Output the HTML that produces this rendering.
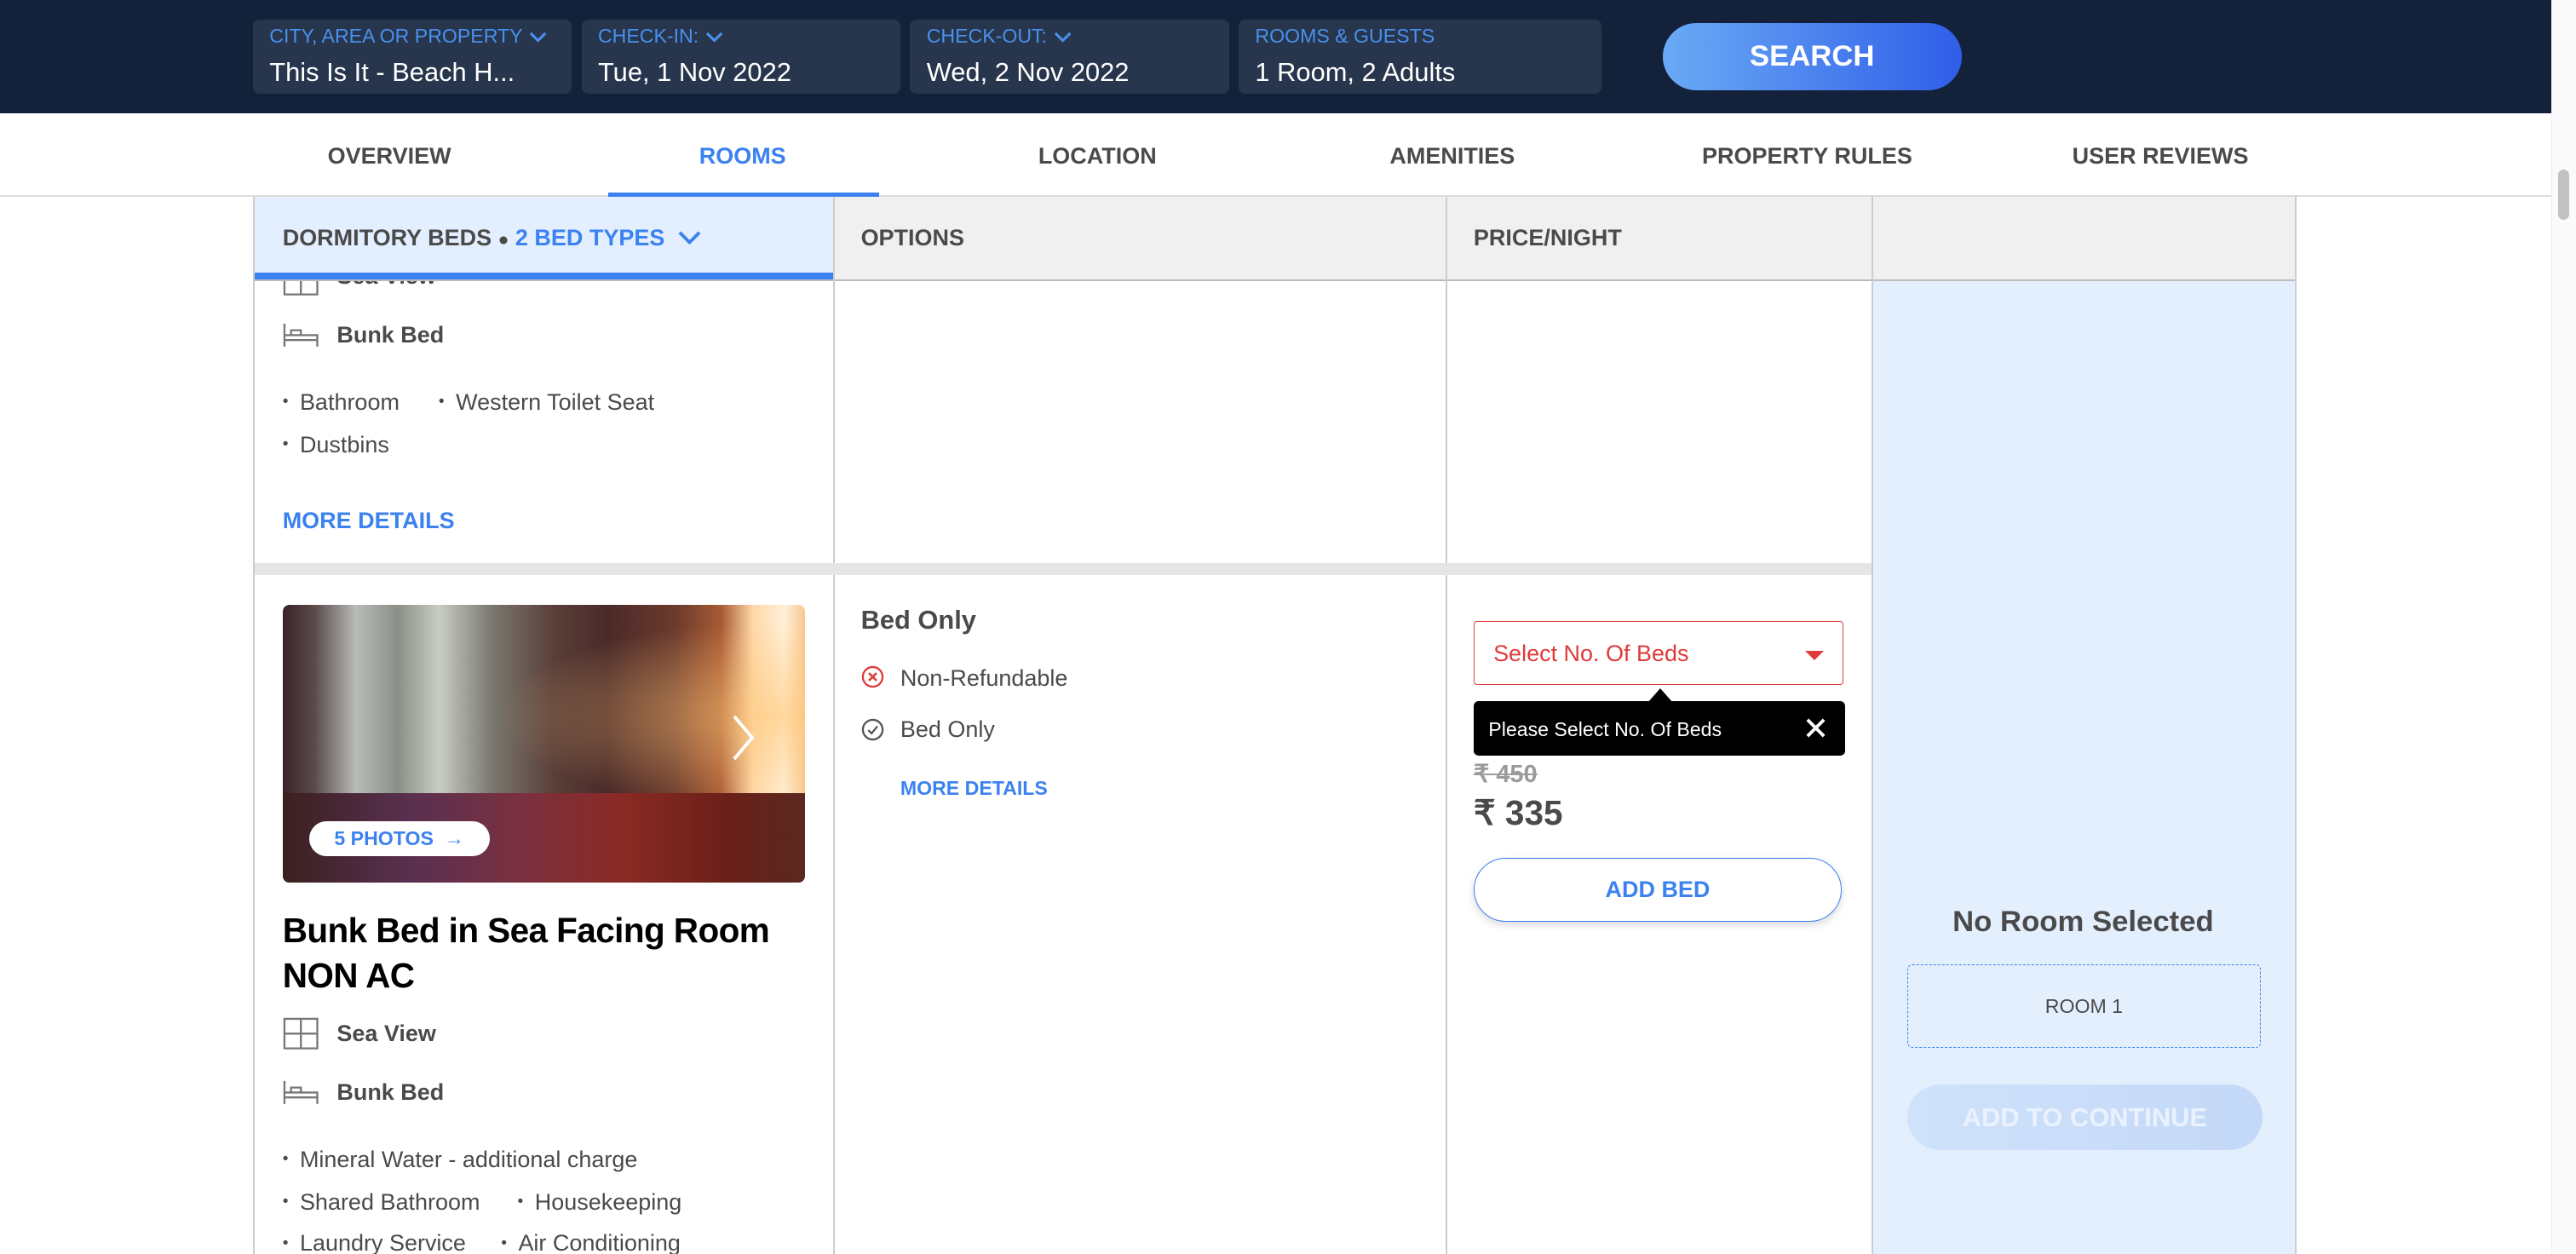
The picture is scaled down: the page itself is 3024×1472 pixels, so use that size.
<!DOCTYPE html>
<html><head><meta charset="utf-8">
<style>
html,body{margin:0;padding:0;background:#fff;overflow:hidden}
body{width:3024px;height:1472px}
#w{zoom:1.928571;width:1568px;height:764px;position:relative;font-family:"Liberation Sans",sans-serif;color:#4a4a4a;overflow:hidden}
.a{position:absolute}
.fld{position:absolute;top:12px;height:45px;background:#27364d;border-radius:4px}
.fld .l{position:absolute;left:10px;top:3px;font-size:12px;color:#4a90ee;white-space:nowrap}
.fld .v{position:absolute;left:10px;top:23px;font-size:16px;color:#fff;white-space:nowrap}
.nav{position:absolute;top:87px;font-size:14px;font-weight:bold;color:#4a4a4a;transform:translateX(-50%);white-space:nowrap}
.vl{position:absolute;width:1px;background:#ccc}
.li{position:absolute;font-size:14px;color:#4a4a4a;white-space:nowrap}
.li:before{content:"•";font-size:10px;margin-right:7px;position:relative;top:-2px}
.chv{display:inline-block;vertical-align:middle;margin-left:4px}
</style></head><body><div id="w">
<!-- header -->
<div class="a" style="left:0;top:0;width:1568px;height:69px;background:#13213b"></div>
<div class="fld" style="left:154px;width:194px"><div class="l">CITY, AREA OR PROPERTY<svg class="chv" width="11" height="7"><path d="M1 1l4.5 4.5L10 1" fill="none" stroke="#4a90ee" stroke-width="1.6"/></svg></div><div class="v">This Is It - Beach H...</div></div>
<div class="fld" style="left:354px;width:194px"><div class="l">CHECK-IN:<svg class="chv" width="11" height="7"><path d="M1 1l4.5 4.5L10 1" fill="none" stroke="#4a90ee" stroke-width="1.6"/></svg></div><div class="v">Tue, 1 Nov 2022</div></div>
<div class="fld" style="left:554px;width:194px"><div class="l">CHECK-OUT:<svg class="chv" width="11" height="7"><path d="M1 1l4.5 4.5L10 1" fill="none" stroke="#4a90ee" stroke-width="1.6"/></svg></div><div class="v">Wed, 2 Nov 2022</div></div>
<div class="fld" style="left:754px;width:221px"><div class="l">ROOMS &amp; GUESTS</div><div class="v">1 Room, 2 Adults</div></div>
<div class="a" style="left:1012px;top:14px;width:182px;height:41px;border-radius:21px;background:linear-gradient(90deg,#6aaaf5,#2f5ee8);color:#fff;font-weight:bold;font-size:18px;text-align:center;line-height:41px">SEARCH</div>
<!-- nav -->
<div class="nav" style="left:237px">OVERVIEW</div>
<div class="nav" style="left:452px;color:#3b82f0">ROOMS</div>
<div class="nav" style="left:668px">LOCATION</div>
<div class="nav" style="left:884px">AMENITIES</div>
<div class="nav" style="left:1100px">PROPERTY RULES</div>
<div class="nav" style="left:1315px">USER REVIEWS</div>
<div class="a" style="left:0;top:119px;width:1553px;height:1px;background:#ddd"></div>
<div class="a" style="left:370px;top:117px;width:165px;height:3px;background:#3b82f0"></div>
<!-- scrollbar -->
<div class="a" style="left:1553px;top:0;width:15px;height:764px;background:#fafafa;border-left:1px solid #eee"></div>
<div class="a" style="left:1557px;top:103px;width:7px;height:31px;border-radius:4px;background:#c1c1c1"></div>
<!-- row1 partial top -->
<svg class="a" style="left:172px;top:160px" width="22" height="20"><path d="M1 1h20v18H1zM11 1v18M1 10h20" fill="none" stroke="#777" stroke-width="1.2"/></svg>
<div class="a" style="left:205px;top:160px;font-size:14px;font-weight:bold">Sea View</div>
<!-- table header -->
<div class="a" style="left:154px;top:120px;width:1243px;height:50px;background:#f0f0f0"></div>
<div class="a" style="left:154px;top:120px;width:353px;height:50px;background:#e3efff"></div>
<div class="a" style="left:154px;top:166px;width:353px;height:4px;background:#3b82f0"></div>
<div class="a" style="left:154px;top:170px;width:1243px;height:1px;background:#bbb"></div>
<div class="a" style="left:172px;top:137px;font-size:14px;font-weight:bold;white-space:nowrap">DORMITORY BEDS <span style="font-size:11px">&#9679;</span> <span style="color:#3b82f0">2 BED TYPES</span><svg class="chv" style="margin-left:8px;margin-top:-3px" width="14" height="9"><path d="M1 1.5l6 6 6-6" fill="none" stroke="#3b82f0" stroke-width="2"/></svg></div>
<div class="a" style="left:524px;top:137px;font-size:14px;font-weight:bold">OPTIONS</div>
<div class="a" style="left:897px;top:137px;font-size:14px;font-weight:bold">PRICE/NIGHT</div>
<!-- right panel -->
<div class="a" style="left:1139px;top:171px;width:258px;height:600px;background:#e4effe"></div>
<!-- verticals -->
<div class="vl" style="left:154px;top:120px;height:650px"></div>
<div class="vl" style="left:507px;top:120px;height:650px"></div>
<div class="vl" style="left:880px;top:120px;height:650px"></div>
<div class="vl" style="left:1139px;top:120px;height:650px"></div>
<div class="vl" style="left:1397px;top:120px;height:650px"></div>
<!-- row1 -->
<svg class="a" style="left:172px;top:196px" width="22" height="16"><path d="M1 1v14M1 8h20v7M1 11h20M5 8V5h6v3" fill="none" stroke="#777" stroke-width="1.2"/></svg>
<div class="a" style="left:205px;top:196px;font-size:14px;font-weight:bold">Bunk Bed</div>
<div class="li" style="left:172px;top:237px">Bathroom</div>
<div class="li" style="left:267px;top:237px">Western Toilet Seat</div>
<div class="li" style="left:172px;top:263px">Dustbins</div>
<div class="a" style="left:172px;top:309px;font-size:14px;font-weight:bold;color:#3b82f0">MORE DETAILS</div>
<div class="a" style="left:155px;top:343px;width:984px;height:7px;background:#e5e5e5"></div>
<!-- row2 image -->
<div class="a" style="left:172px;top:368px;width:318px;height:169px;border-radius:4px;overflow:hidden;background:linear-gradient(90deg,#3a2226 0%,#5a4a4a 6%,#b8bcb8 14%,#8a9088 22%,#c8ccc4 30%,#7a7870 40%,#5a3e38 52%,#4a2a2a 62%,#6a3a2c 75%,#a85a34 84%,#ffd8a8 90%,#fff0d8 96%,#f8c890 100%)">
<div class="a" style="left:0;top:0;width:318px;height:169px;background:radial-gradient(ellipse at 95% 40%,rgba(255,200,120,.6),rgba(255,150,60,0) 40%)"></div>
<div class="a" style="left:0;top:115px;width:318px;height:54px;background:linear-gradient(90deg,#3a2020,#5a3050 25%,#7a3040 45%,#8a2a24 65%,#6a2018 85%,#5a2820)"></div>
<div class="a" style="left:16px;top:132px;width:110px;height:21px;border-radius:11px;background:#fff;color:#3b82f0;font-size:12px;font-weight:bold;line-height:21px;text-align:center">5 PHOTOS &nbsp;&rarr;</div>
<svg class="a" style="left:273px;top:66px" width="16" height="30"><path d="M2 2l11 13L2 28" fill="none" stroke="#fff" stroke-width="2"/></svg>
</div>
<div class="a" style="left:172px;top:553px;font-size:21px;font-weight:bold;color:#000;line-height:27px;width:330px;letter-spacing:-0.3px">Bunk Bed in Sea Facing Room NON AC</div>
<svg class="a" style="left:172px;top:619px" width="22" height="20"><path d="M1 1h20v18H1zM11 1v18M1 10h20" fill="none" stroke="#777" stroke-width="1.2"/></svg>
<div class="a" style="left:205px;top:621px;font-size:14px;font-weight:bold">Sea View</div>
<svg class="a" style="left:172px;top:657px" width="22" height="16"><path d="M1 1v14M1 8h20v7M1 11h20M5 8V5h6v3" fill="none" stroke="#777" stroke-width="1.2"/></svg>
<div class="a" style="left:205px;top:657px;font-size:14px;font-weight:bold">Bunk Bed</div>
<div class="li" style="left:172px;top:698px">Mineral Water - additional charge</div>
<div class="li" style="left:172px;top:724px">Shared Bathroom</div>
<div class="li" style="left:315px;top:724px">Housekeeping</div>
<div class="li" style="left:172px;top:749px">Laundry Service</div>
<div class="li" style="left:305px;top:749px">Air Conditioning</div>
<!-- options -->
<div class="a" style="left:524px;top:368px;font-size:16px;font-weight:bold">Bed Only</div>
<svg class="a" style="left:524px;top:405px" width="14" height="14"><circle cx="7" cy="7" r="6" fill="none" stroke="#e03a3a" stroke-width="1.2"/><path d="M4.7 4.7l4.6 4.6M9.3 4.7l-4.6 4.6" stroke="#e03a3a" stroke-width="1.3"/></svg>
<div class="a" style="left:548px;top:405px;font-size:14px">Non-Refundable</div>
<svg class="a" style="left:524px;top:437px" width="14" height="14"><circle cx="7" cy="7" r="6" fill="none" stroke="#555" stroke-width="1.2"/><path d="M4.3 7.3l2 2 3.5-4.3" fill="none" stroke="#555" stroke-width="1.2"/></svg>
<div class="a" style="left:548px;top:436px;font-size:14px">Bed Only</div>
<div class="a" style="left:548px;top:473px;font-size:12px;font-weight:bold;color:#3b82f0">MORE DETAILS</div>
<!-- price -->
<div class="a" style="left:897px;top:378px;width:224px;height:38px;border:1px solid #e03a3a;border-radius:2px;background:#fff"></div>
<div class="a" style="left:909px;top:390px;font-size:14px;color:#e03a3a">Select No. Of Beds</div>
<div class="a" style="left:1099px;top:396px;width:0;height:0;border-left:6px solid transparent;border-right:6px solid transparent;border-top:6px solid #e03a3a"></div>
<div class="a" style="left:1003px;top:419px;width:0;height:0;border-left:8px solid transparent;border-right:8px solid transparent;border-bottom:9px solid #000"></div>
<div class="a" style="left:897px;top:427px;width:226px;height:33px;background:#000;border-radius:3px"></div>
<div class="a" style="left:906px;top:437px;font-size:12px;color:#fff">Please Select No. Of Beds</div>
<svg class="a" style="left:1098px;top:436px" width="14" height="14"><path d="M2 2l10 10M12 2L2 12" stroke="#fff" stroke-width="2"/></svg>
<div class="a" style="left:897px;top:462px;font-size:15px;color:#9b9b9b;text-decoration:line-through;font-weight:bold">&#8377; 450</div>
<div class="a" style="left:897px;top:482px;font-size:21px;color:#4a4a4a;font-weight:bold">&#8377; 335</div>
<div class="a" style="left:897px;top:522px;width:223px;height:38px;border:1px solid #3b82f0;border-radius:20px;background:#fff;box-shadow:0 2px 5px rgba(0,0,0,.15);text-align:center;line-height:38px;font-size:14px;font-weight:bold;color:#3b82f0">ADD BED</div>
<!-- right -->
<div class="a" style="left:1139px;top:551px;width:258px;text-align:center;font-size:18px;font-weight:bold;color:#4a4a4a">No Room Selected</div>
<div class="a" style="left:1161px;top:587px;width:214px;height:50px;border:1px dashed #3b82f0;border-radius:3px;text-align:center;line-height:50px;font-size:12px;color:#4a4a4a">ROOM 1</div>
<div class="a" style="left:1161px;top:660px;width:216px;height:40px;border-radius:20px;background:linear-gradient(90deg,#cfe2fb,#c4d9f8);text-align:center;line-height:40px;font-size:16px;font-weight:bold;color:#eaf2ff">ADD TO CONTINUE</div>
</div></body></html>
